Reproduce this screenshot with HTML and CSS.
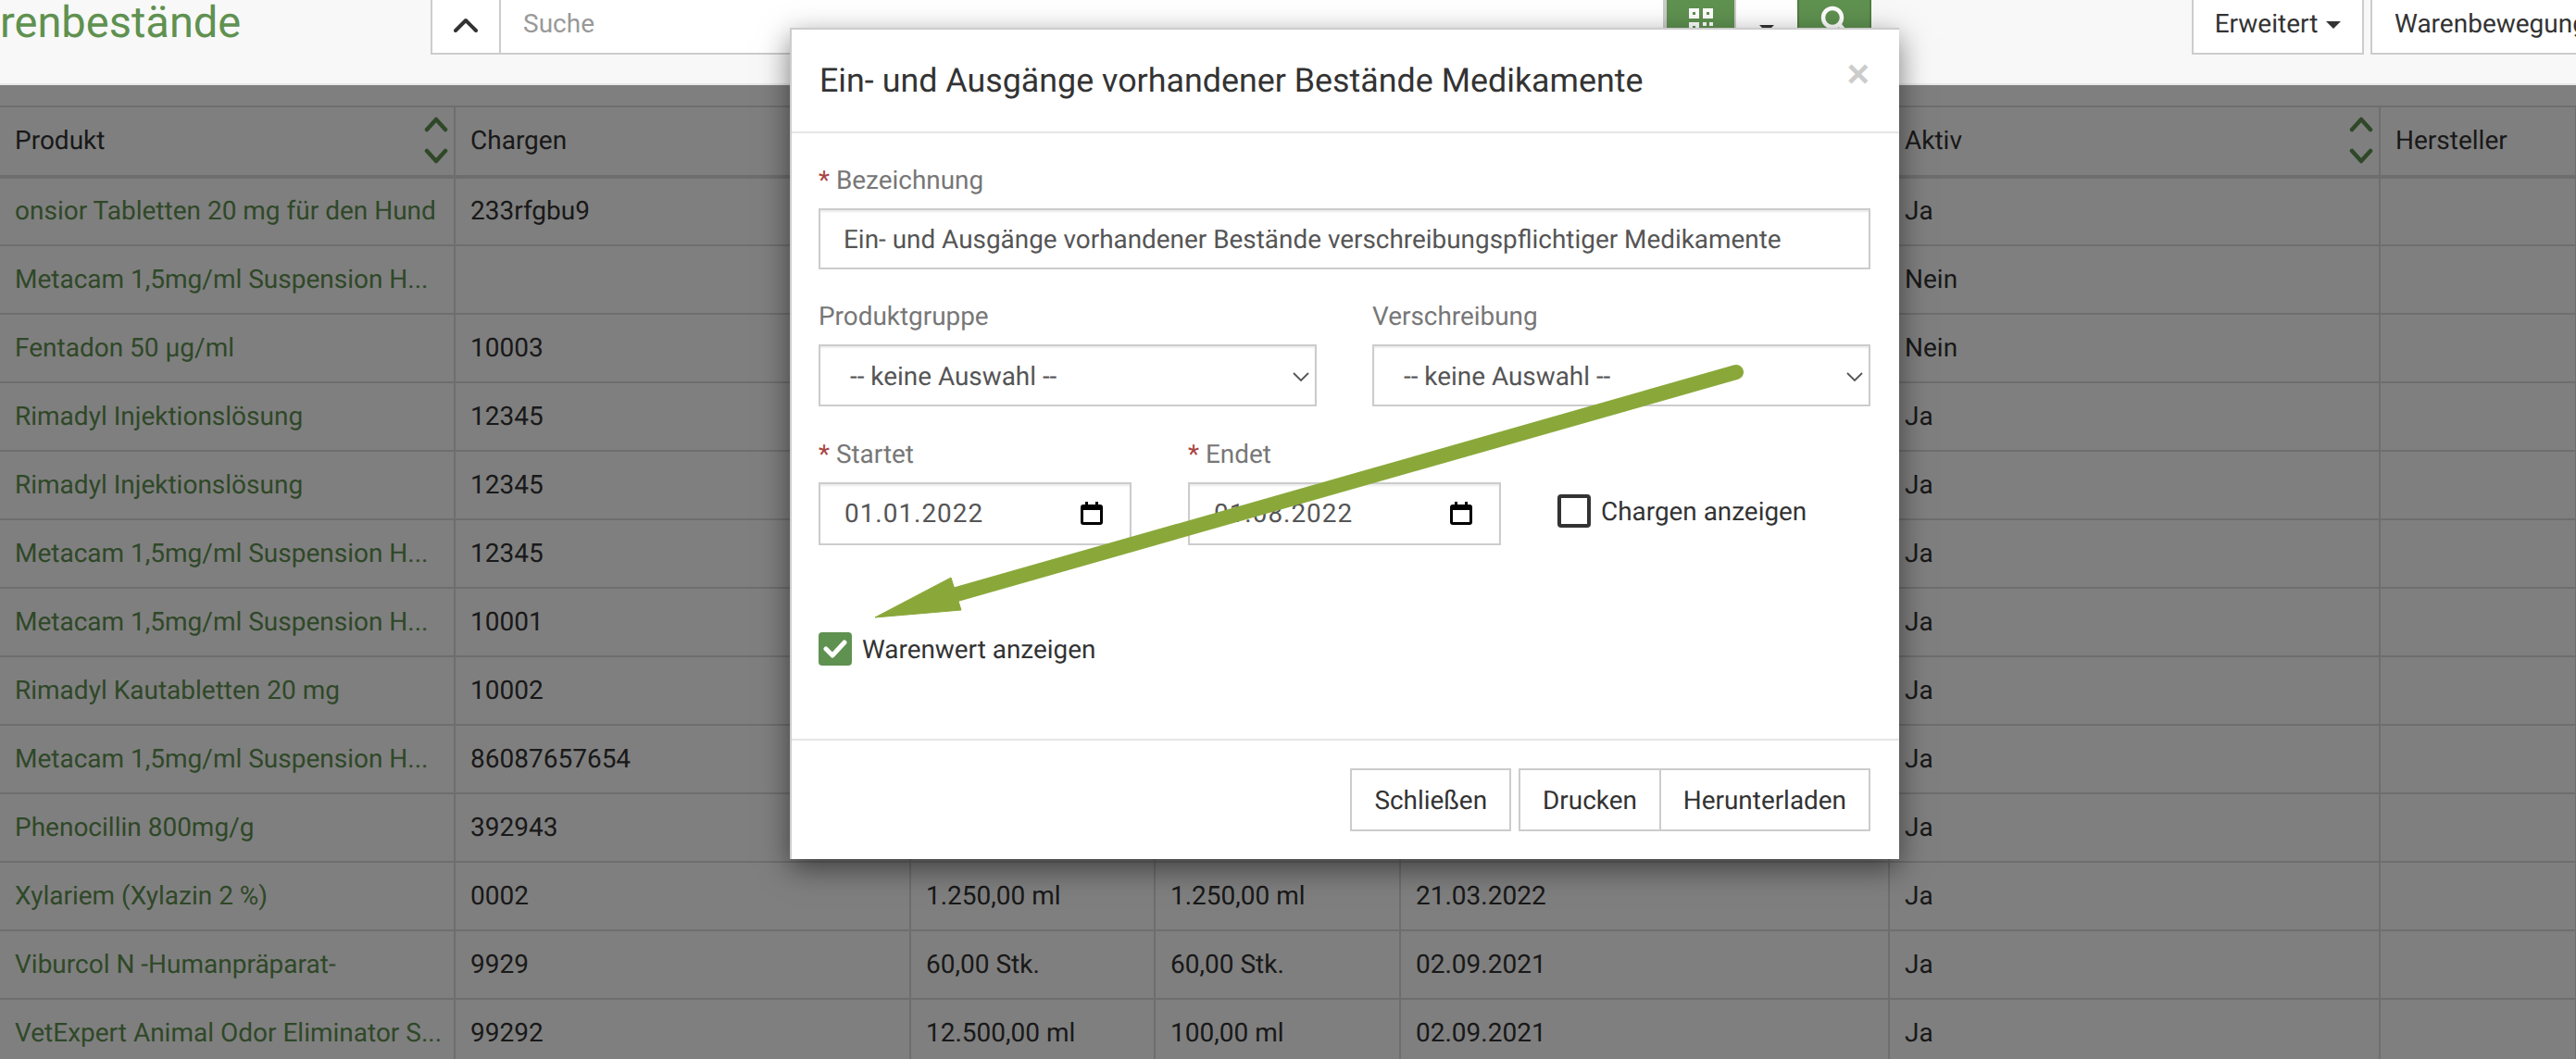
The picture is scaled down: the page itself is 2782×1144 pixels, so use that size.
FILE: index.html
```html
<!DOCTYPE html>
<html lang="de">
<head>
    <meta charset="UTF-8">
    <title>Warenbestände</title>
    <link rel="stylesheet" href="styles.css">
</head>
<body>

    <div class="topbar">
        <h1 class="page-title">renbestände</h1>
        <div class="search-group">
            <button class="btn btn-toggle">
                <svg width="26" height="16" viewBox="0 0 26 16"><path d="M2 14 L13 3 L24 14" class="chevron"/></svg>
            </button>
            <input class="search-input" type="text" placeholder="Suche">
            <button class="btn btn-green btn-qr">
                <svg width="26" height="26" viewBox="0 0 26 26" fill="#fff">
                    <path fill-rule="evenodd" d="M0 0h11v11H0z M4 4v3h3V4z M15 0h11v11H15z M19 4v3h3V4z M0 15h11v11H0z M4 19v3h3v-3z"/>
                    <path d="M15 15h4v4h-4z M22 15h4v4h-4z M15 22h11v4H15z"/>
                </svg>
            </button>
            <button class="btn btn-caret"><span class="caret caret-big"></span></button>
            <button class="btn btn-green btn-search">
                <svg width="38" height="42" viewBox="0 0 38 42" fill="none" stroke="#fff" stroke-width="4.500">
                    <circle cx="17" cy="18" r="10"/>
                    <path d="M24 25 L33 36"/>
                </svg>
            </button>
        </div>
        <div class="top-actions">
            <button class="btn btn-extended">Erweitert <span class="caret"></span></button>
            <button class="btn btn-movement">Warenbewegungen</button>
        </div>
    </div>

    <div class="content">
        <table class="stock-table">
            <colgroup>
                <col class="col-product"><col class="col-batch"><col class="col-amount"><col class="col-amount2">
                <col class="col-date"><col class="col-active"><col class="col-maker">
            </colgroup>
            <thead>
                <tr>
                    <th>
                        <div class="th-sort">Produkt
                            <span class="sort-arrows">
                                <svg width="26" height="18" viewBox="0 0 26 18"><path d="M3 15 L13 4 L23 15"/></svg>
                                <svg width="26" height="18" viewBox="0 0 26 18"><path d="M3 3 L13 14 L23 3"/></svg>
                            </span>
                        </div>
                    </th>
                    <th>Chargen</th><th></th><th></th><th></th>
                    <th>
                        <div class="th-sort">Aktiv
                            <span class="sort-arrows">
                                <svg width="26" height="18" viewBox="0 0 26 18"><path d="M3 15 L13 4 L23 15"/></svg>
                                <svg width="26" height="18" viewBox="0 0 26 18"><path d="M3 3 L13 14 L23 3"/></svg>
                            </span>
                        </div>
                    </th>
                    <th>Hersteller</th>
                </tr>
            </thead>
            <tbody>
                <tr><td><a>onsior Tabletten 20 mg für den Hund</a></td><td>233rfgbu9</td><td></td><td></td><td></td><td>Ja</td><td></td></tr>
                <tr><td><a>Metacam 1,5mg/ml Suspension H...</a></td><td></td><td></td><td></td><td></td><td>Nein</td><td></td></tr>
                <tr><td><a>Fentadon 50 µg/ml</a></td><td>10003</td><td></td><td></td><td></td><td>Nein</td><td></td></tr>
                <tr><td><a>Rimadyl Injektionslösung</a></td><td>12345</td><td></td><td></td><td></td><td>Ja</td><td></td></tr>
                <tr><td><a>Rimadyl Injektionslösung</a></td><td>12345</td><td></td><td></td><td></td><td>Ja</td><td></td></tr>
                <tr><td><a>Metacam 1,5mg/ml Suspension H...</a></td><td>12345</td><td></td><td></td><td></td><td>Ja</td><td></td></tr>
                <tr><td><a>Metacam 1,5mg/ml Suspension H...</a></td><td>10001</td><td></td><td></td><td></td><td>Ja</td><td></td></tr>
                <tr><td><a>Rimadyl Kautabletten 20 mg</a></td><td>10002</td><td></td><td></td><td></td><td>Ja</td><td></td></tr>
                <tr><td><a>Metacam 1,5mg/ml Suspension H...</a></td><td>86087657654</td><td></td><td></td><td></td><td>Ja</td><td></td></tr>
                <tr><td><a>Phenocillin 800mg/g</a></td><td>392943</td><td></td><td></td><td></td><td>Ja</td><td></td></tr>
                <tr><td><a>Xylariem (Xylazin 2 %)</a></td><td>0002</td><td>1.250,00 ml</td><td>1.250,00 ml</td><td>21.03.2022</td><td>Ja</td><td></td></tr>
                <tr><td><a>Viburcol N -Humanpräparat-</a></td><td>9929</td><td>60,00 Stk.</td><td>60,00 Stk.</td><td>02.09.2021</td><td>Ja</td><td></td></tr>
                <tr><td><a>VetExpert Animal Odor Eliminator S...</a></td><td>99292</td><td>12.500,00 ml</td><td>100,00 ml</td><td>02.09.2021</td><td>Ja</td><td></td></tr>
            </tbody>
        </table>
        <div class="backdrop"></div>
    </div>

    <div class="modal">
        <div class="modal-header">
            <h2 class="modal-title">Ein- und Ausgänge vorhandener Bestände Medikamente</h2>
            <span class="modal-close">×</span>
        </div>
        <div class="modal-body">
            <div class="field">
                <label><span class="required">*</span> Bezeichnung</label>
                <input class="control control-text" type="text" value="Ein- und Ausgänge vorhandener Bestände verschreibungspflichtiger Medikamente">
            </div>
            <div class="form-row">
                <div class="field field-half">
                    <label>Produktgruppe</label>
                    <div class="control control-select">
                        <span>-- keine Auswahl --</span>
                        <svg width="18" height="10" viewBox="0 0 18 10"><path d="M1 1 L9 9 L17 1"/></svg>
                    </div>
                </div>
                <div class="field field-half">
                    <label>Verschreibung</label>
                    <div class="control control-select">
                        <span>-- keine Auswahl --</span>
                        <svg width="18" height="10" viewBox="0 0 18 10"><path d="M1 1 L9 9 L17 1"/></svg>
                    </div>
                </div>
            </div>
            <div class="form-row form-row-dates">
                <div class="field field-date">
                    <label><span class="required">*</span> Startet</label>
                    <div class="control control-date">
                        <span>01.01.2022</span>
                        <svg width="24" height="26" viewBox="0 0 24 26"><path class="cal-outline" d="M3 5.5h18a1.5 1.5 0 0 1 1.500 1.500v16a1.500 1.500 0 0 1-1.500 1.500H3a1.500 1.500 0 0 1-1.500-1.500V7A1.500 1.500 0 0 1 3 5.500z"/><path d="M2 5h20v5H2z M5 1h3v5H5z M16 1h3v5h-3z"/></svg>
                    </div>
                </div>
                <div class="field field-date">
                    <label><span class="required">*</span> Endet</label>
                    <div class="control control-date">
                        <span>01.08.2022</span>
                        <svg width="24" height="26" viewBox="0 0 24 26"><path class="cal-outline" d="M3 5.5h18a1.5 1.5 0 0 1 1.500 1.500v16a1.500 1.500 0 0 1-1.500 1.500H3a1.500 1.500 0 0 1-1.500-1.500V7A1.500 1.500 0 0 1 3 5.500z"/><path d="M2 5h20v5H2z M5 1h3v5H5z M16 1h3v5h-3z"/></svg>
                    </div>
                </div>
                <div class="check-item check-inline">
                    <span class="check-box"></span>
                    <span>Chargen anzeigen</span>
                </div>
            </div>
            <div class="check-item check-value">
                <span class="check-box is-checked">
                    <svg width="26" height="22" viewBox="0 0 26 22"><path d="M3 11 L10 18 L23 4"/></svg>
                </span>
                <span>Warenwert anzeigen</span>
            </div>
        </div>
        <div class="modal-footer">
            <button class="btn btn-footer">Schließen</button>
            <div class="btn-pair">
                <button class="btn btn-footer">Drucken</button>
                <button class="btn btn-footer btn-joined">Herunterladen</button>
            </div>
        </div>
    </div>

    <!-- annotation arrow drawn over the finished screenshot -->
    <svg class="annotation" width="2782" height="1144" viewBox="0 0 2782 1144">
        <path class="arrow-shaft" d="M1875 402 L1033 642"/>
        <path class="arrow-head" d="M1027 624 L945 667 L1038 659 Z"/>
    </svg>

</body>
</html>
```

FILE: styles.css
```css
* {
    box-sizing: border-box;
}

body {
    margin: 0;
    height: 1144px;
    overflow: hidden;
    background-color: #ffffff;
    color: #333333;
    font-family: Roboto, sans-serif;
    font-size: 28px;
    text-rendering: geometricPrecision;
}

.btn {
    height: 68px;
    padding: 0 24px;
    border: 2px solid #cccccc;
    background-color: #ffffff;
    color: #333333;
    font-family: inherit;
    font-size: 28px;
    text-rendering: inherit;
    white-space: nowrap;
}

.caret {
    display: inline-block;
    margin-left: 2px;
    vertical-align: middle;
    border-top: 8px solid #333333;
    border-left: 8px solid transparent;
    border-right: 8px solid transparent;
}

/* Top bar */
.topbar {
    display: flex;
    height: 92px;
    overflow: hidden;
    background-color: #f8f8f8;
    border-bottom: 2px solid #e7e7e7;
}

.page-title {
    flex: none;
    width: 465px;
    margin: 0;
    color: #5f9150;
    font-size: 47px;
    font-weight: 400;
    line-height: 50px;
    white-space: nowrap;
}

.search-group {
    display: flex;
    flex: none;
    width: 1556px;
    height: 68px;
    margin-top: -9px;
}

.btn-toggle {
    flex: none;
    width: 76px;
    padding: 0;
}

.chevron {
    fill: none;
    stroke: #333333;
    stroke-width: 4;
    stroke-linecap: round;
    stroke-linejoin: round;
}

.search-input {
    flex: 1;
    min-width: 0;
    margin-left: -2px;
    padding: 0 24px;
    border: 2px solid #cccccc;
    font-family: inherit;
    font-size: 28px;
}

.search-input::placeholder {
    color: #999999;
}

.btn-green {
    padding: 0;
    background-color: #5f9150;
    border-color: #4f7d42;
}

.btn-qr {
    flex: none;
    width: 77px;
    border-color: #cccccc;
}

.btn-caret {
    flex: none;
    width: 66px;
    padding: 0;
    border-left: none;
    border-right: none;
}

.caret-big {
    margin: 0;
    position: relative;
    top: 4px;
}

.btn-search {
    flex: none;
    width: 80px;
}

.top-actions {
    display: flex;
    flex: none;
    gap: 7px;
    height: 68px;
    margin-top: -9px;
    margin-left: 346px;
}

.btn-extended {
    width: 186px;
    padding: 0;
}

.btn-movement {
    text-align: left;
}

/* Stock table */
.content {
    position: relative;
    height: 1052px;
    padding-top: 22px;
    overflow: hidden;
}

.stock-table {
    width: 2782px;
    table-layout: fixed;
    border-collapse: collapse;
}

.col-product { width: 491px; }
.col-batch { width: 492px; }
.col-amount { width: 264px; }
.col-amount2 { width: 265px; }
.col-date { width: 528px; }
.col-active { width: 530px; }
.col-maker { width: 212px; }

.stock-table th,
.stock-table td {
    padding: 0 6px 2px 16px;
    border: 2px solid #dddddd;
    font-weight: 400;
    text-align: left;
    white-space: nowrap;
}

.stock-table th:first-child,
.stock-table td:first-child {
    padding-left: 16px;
    border-left: none;
}

.stock-table th {
    height: 76px;
    border-bottom-width: 4px;
}

.stock-table td {
    height: 74px;
}

.stock-table a {
    color: #5f9150;
}

.th-sort {
    display: flex;
    justify-content: space-between;
    align-items: center;
}

.sort-arrows {
    display: flex;
    flex-direction: column;
    gap: 17px;
}

.sort-arrows svg {
    display: block;
    fill: none;
    stroke: #5f9150;
    stroke-width: 4.5;
    stroke-linecap: round;
    stroke-linejoin: round;
}

.backdrop {
    position: absolute;
    inset: 0;
    background-color: rgba(0, 0, 0, 0.5);
}

/* Modal */
.modal {
    position: absolute;
    left: 853px;
    top: 30px;
    width: 1198px;
    height: 898px;
    background-color: #ffffff;
    border: 2px solid rgba(0, 0, 0, 0.2);
    border-bottom: none;
    border-right: none;
    font-size: 27.9px;
    box-shadow: 0 10px 30px rgba(0, 0, 0, 0.5);
}

.modal-header {
    display: flex;
    justify-content: space-between;
    height: 112px;
    padding: 31px 32px 0 30px;
    border-bottom: 2px solid #e5e5e5;
}

.modal-title {
    margin: 0;
    color: #333333;
    font-size: 35.85px;
    font-weight: 400;
    line-height: 48px;
}

.modal-close {
    margin-top: -7px;
    color: #cccccc;
    font-family: "Liberation Sans", sans-serif;
    font-size: 42px;
    font-weight: 700;
    line-height: 48px;
}

.modal-body {
    height: 656px;
    padding: 31px 31px 0 29px;
    border-bottom: 2px solid #e5e5e5;
}

.field label {
    display: block;
    height: 40px;
    margin-bottom: 10px;
    color: #777777;
    line-height: 40px;
}

.required {
    color: #a94442;
}

.control {
    display: flex;
    align-items: center;
    justify-content: space-between;
    width: 100%;
    border: 2px solid #cccccc;
    box-shadow: inset 0 2px 2px rgba(0, 0, 0, 0.075);
    color: #555555;
    font-family: inherit;
    font-size: inherit;
    text-rendering: inherit;
}

.control-text {
    height: 66px;
    padding: 0 25px;
}

.form-row {
    display: flex;
    gap: 60px;
    margin-top: 31px;
}

.field-half {
    flex: 1;
}

.control-select {
    height: 67px;
    padding: 2px 6px 0 32px;
}

.control-select svg {
    fill: none;
    stroke: #555555;
    stroke-width: 1.800;
}

.form-row-dates {
    gap: 61px;
    margin-top: 32px;
}

.field-date {
    flex: none;
    width: 338px;
}

.control-date {
    height: 68px;
    padding: 0 29px 2px 26px;
    letter-spacing: 1px;
}

.control-date svg {
    fill: #000000;
}

.cal-outline {
    fill: none;
    stroke: #000000;
    stroke-width: 3;
}

.check-item {
    display: flex;
    align-items: center;
    gap: 11px;
}

.check-inline {
    height: 68px;
    margin-top: 47px;
}

.check-value {
    margin-top: 94px;
}

.check-box {
    display: flex;
    align-items: center;
    justify-content: center;
    flex: none;
    width: 36px;
    height: 36px;
    border: 4px solid #333333;
    border-radius: 4px;
}

.check-box.is-checked {
    background-color: #5f9150;
    border: none;
}

.check-box svg {
    fill: none;
    stroke: #ffffff;
    stroke-width: 5;
    stroke-linecap: round;
    stroke-linejoin: round;
}

.modal-footer {
    display: flex;
    justify-content: flex-end;
    gap: 8px;
    padding: 30px 31px 0 0;
}

.btn-footer {
    padding: 0 24px;
    font-size: 27.9px;
}

.btn-pair {
    display: flex;
}

.btn-joined {
    margin-left: -2px;
}

/* Annotation */
.annotation {
    position: absolute;
    left: 0;
    top: 0;
    pointer-events: none;
}

.arrow-shaft {
    fill: none;
    stroke: #8aa83a;
    stroke-width: 16;
    stroke-linecap: round;
}

.arrow-head {
    fill: #8aa83a;
    stroke: #8aa83a;
    stroke-width: 1;
}
```
